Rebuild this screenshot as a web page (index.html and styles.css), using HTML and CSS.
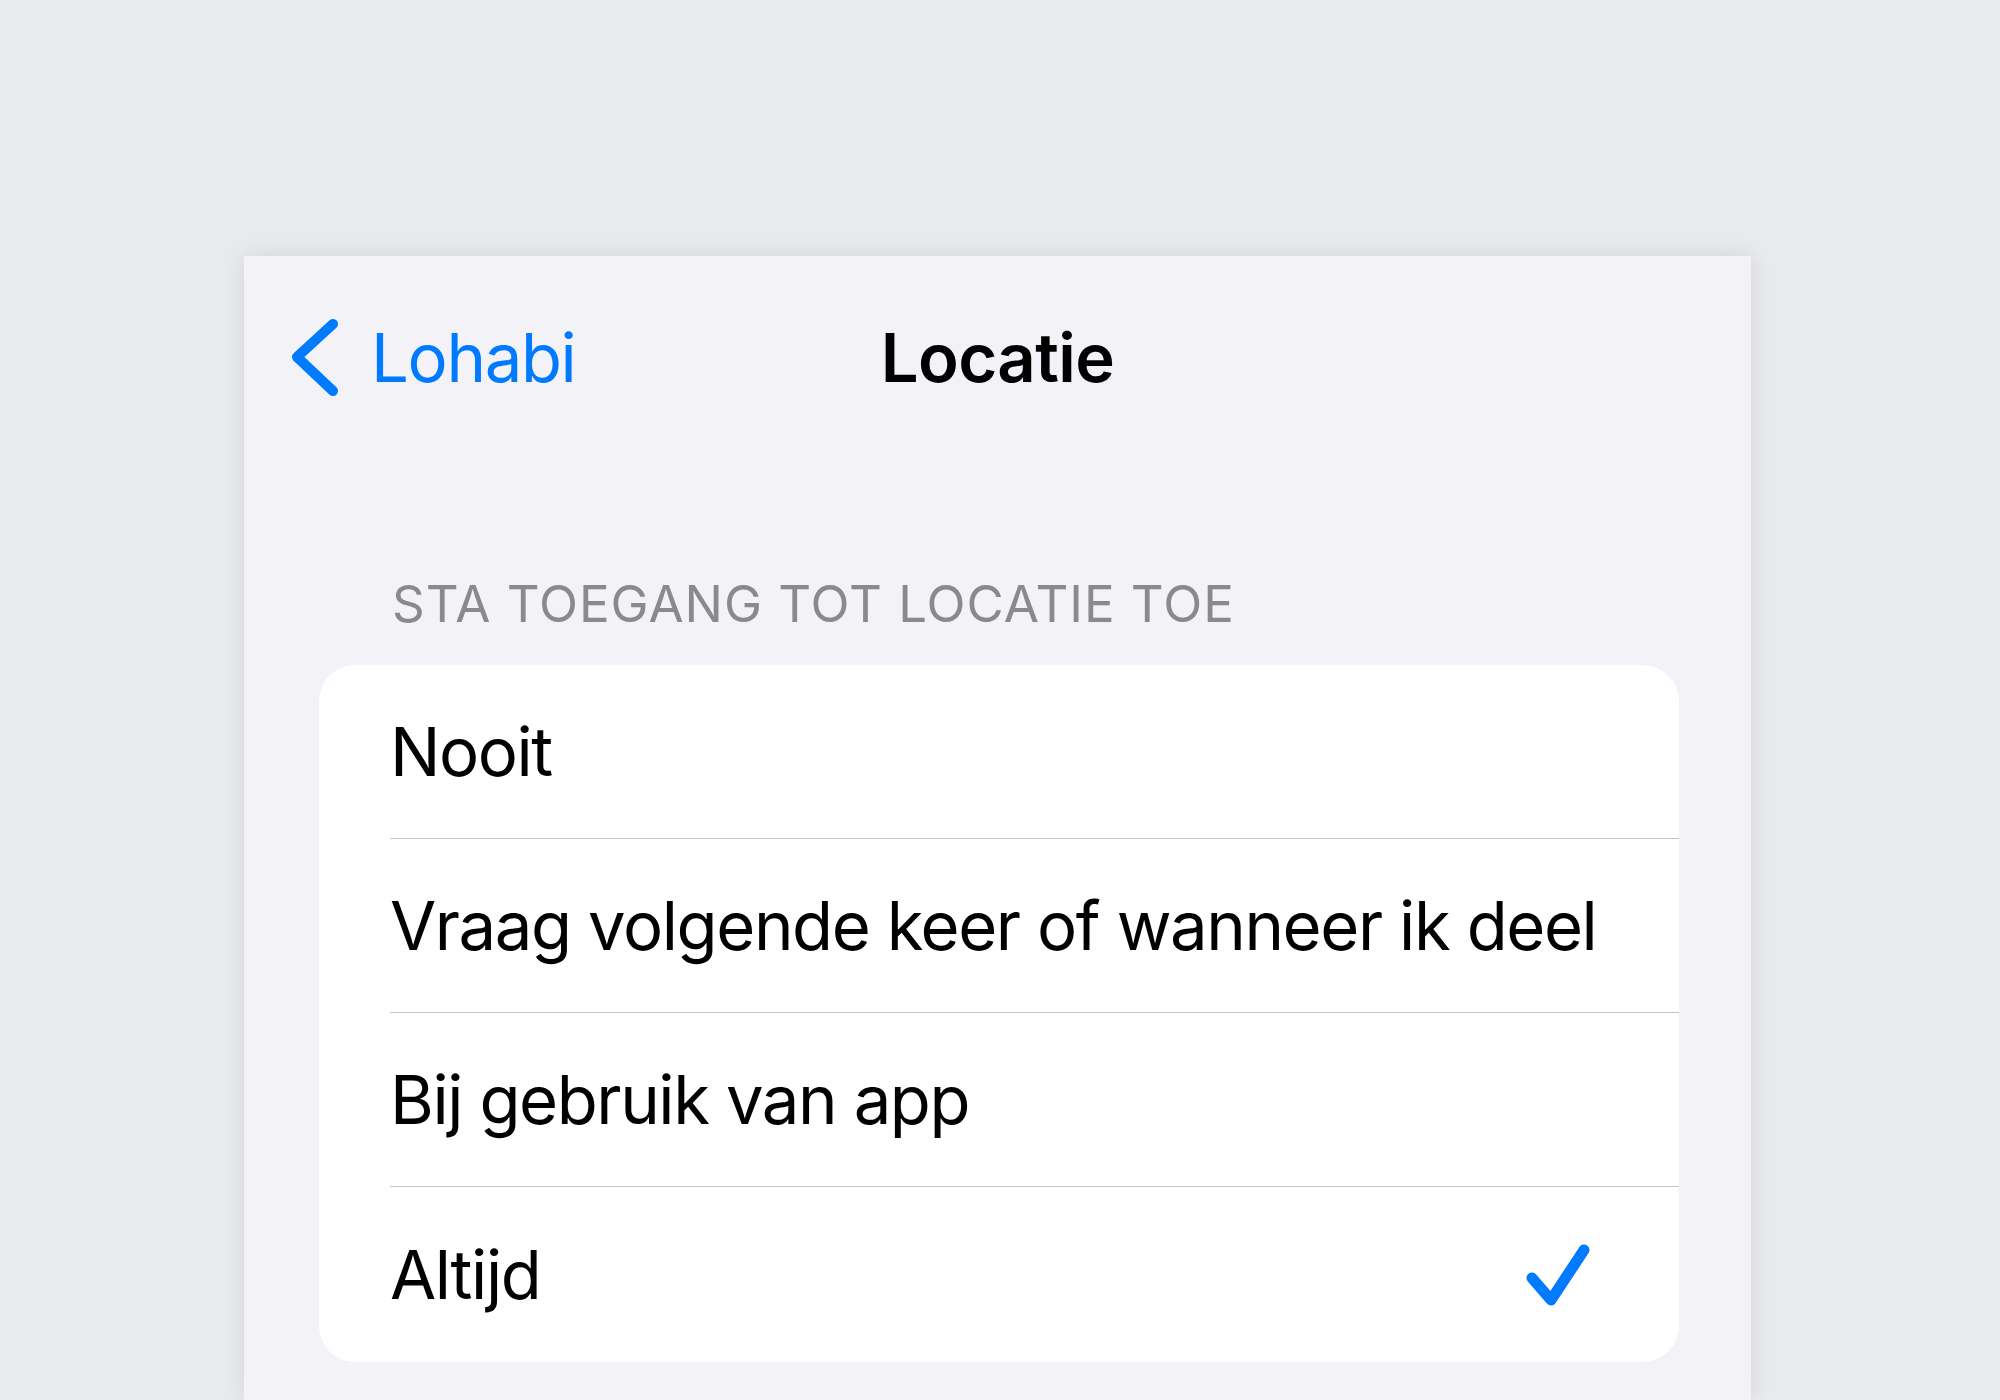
FILE: index.html
```html
<!DOCTYPE html>
<html lang="nl">
<head>
<meta charset="utf-8">
<title>Locatie</title>
<link rel="stylesheet" href="styles.css">
</head>
<body>
<div class="screen">
  <header class="nav">
    <a class="back" href="#">
      <svg class="chev" width="52" height="82" viewBox="0 0 52 82" aria-hidden="true">
        <polyline points="45,8 9,41 45,75" fill="none" stroke="#007aff" stroke-width="10" stroke-linecap="round" stroke-linejoin="round"/>
      </svg>
      <span class="back-label">Lohabi</span>
    </a>
    <h1 class="title">Locatie</h1>
    <span class="nav-spacer"></span>
  </header>
  <section class="group">
    <h2 class="group-header">STA TOEGANG TOT LOCATIE TOE</h2>
    <ul class="list">
      <li class="row"><div class="row-inner"><span class="row-label">Nooit</span></div></li>
      <li class="row"><div class="row-inner"><span class="row-label">Vraag volgende keer of wanneer ik deel</span></div></li>
      <li class="row"><div class="row-inner"><span class="row-label">Bij gebruik van app</span></div></li>
      <li class="row"><div class="row-inner"><span class="row-label">Altijd</span>
        <svg class="check" width="70" height="70" viewBox="0 0 70 70" aria-hidden="true">
          <polyline points="9,38 28,60 61,10" fill="none" stroke="#007aff" stroke-width="11" stroke-linecap="round" stroke-linejoin="round"/>
        </svg></div></li>
    </ul>
  </section>
</div>
</body>
</html>
```

FILE: styles.css
```css
html, body {
  margin: 0;
  padding: 0;
}
body {
  background: #e9eaec;
  font-family: Inter, "Liberation Sans", sans-serif;
  overflow: hidden;
  height: 1400px;
}
.screen {
  margin: 256px 0 0 244px;
  width: 1507px;
  min-height: 1144px;
  background: #f2f2f7;
  box-shadow: 0 0 22px rgba(0, 0, 0, 0.09);
}
.nav {
  height: 202px;
  display: grid;
  grid-template-columns: 1fr auto 1fr;
  align-items: center;
  padding-left: 44px;
}
.back {
  display: flex;
  align-items: center;
  gap: 31px;
  text-decoration: none;
  color: #007aff;
}
.chev {
  display: block;
}
.back-label {
  font-size: 67px;
  line-height: 1;
  letter-spacing: -0.02em;
}
.title {
  margin: 0;
  font-size: 67px;
  line-height: 1;
  font-weight: 600;
  color: #000;
  letter-spacing: -0.6px;
  transform: translateX(-22px);
}
.group {
  padding: 120px 72px 0 75px;
}
.group-header {
  margin: 0 0 36px 73px;
  font-size: 51px;
  line-height: 1;
  font-weight: 400;
  color: #8a8a8e;
  letter-spacing: 0.95px;
  white-space: nowrap;
}
.list {
  list-style: none;
  margin: 0;
  padding: 0;
  background: #fff;
  border-radius: 36px;
  overflow: hidden;
}
.row {
  padding-left: 71px;
}
.row-inner {
  height: 173px;
  display: flex;
  align-items: center;
  justify-content: space-between;
  padding-right: 86px;
  border-bottom: 1px solid #c6c6c8;
}
.row:last-child .row-inner {
  border-bottom: none;
  height: 175px;
}
.row-label {
  font-size: 67px;
  line-height: 1;
  color: #000;
  letter-spacing: -1.42px;
  white-space: nowrap;
}
.check {
  display: block;
}
```
